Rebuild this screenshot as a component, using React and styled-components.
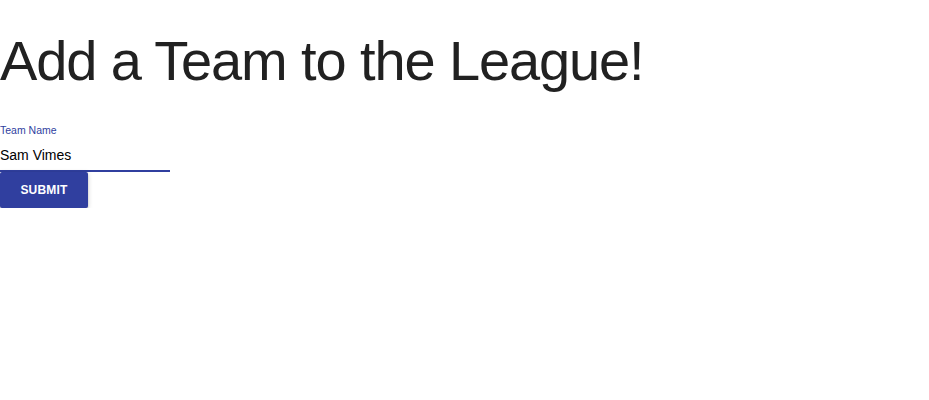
import {useEffect, useRef} from 'react';
import styled, {createGlobalStyle} from 'styled-components';

const GlobalStyle = createGlobalStyle`
    html, body {
        margin: 0;
        padding: 0;
        background: #fff;
        font-family: "Liberation Sans", Arial, sans-serif;
    }
`

const Page = styled.div`
    display: flex;
    flex-direction: column;
    align-items: flex-start;
`

const Title = styled.h1`
    margin: 24px 0 0;
    font-size: 56px;
    font-weight: 400;
    line-height: 73px;
    letter-spacing: -0.02em;
    color: #212121;
`

const Form = styled.form`
    display: flex;
    flex-direction: column;
    align-items: flex-start;
    margin-top: 28px;
`

const Field = styled.div`
    display: flex;
    flex-direction: column;
    width: 170px;
    border-bottom: 2px solid #303f9f;
`

const Label = styled.label`
    font-size: 10.5px;
    color: #303f9f;
    line-height: 1;
    margin-bottom: 11px;
`

const Input = styled.input`
    display: block;
    box-sizing: content-box;
    height: 16px;
    border: none;
    outline: none;
    padding: 0 0 7px;
    font-family: inherit;
    font-size: 14px;
    line-height: 16px;
    color: #000;
    background: transparent;
    caret-color: #000;
`

const Button = styled.button`
    width: 88px;
    height: 36px;
    padding: 0;
    border: none;
    border-radius: 2px;
    background: #303f9f;
    color: #fff;
    font-family: inherit;
    font-size: 12px;
    font-weight: 700;
    letter-spacing: 0.2px;
    text-transform: uppercase;
    box-shadow: 0 1px 5px rgba(0,0,0,0.2), 0 2px 2px rgba(0,0,0,0.14), 0 3px 1px -2px rgba(0,0,0,0.12);
    cursor: pointer;
`

export default function App() {
    const inputRef = useRef(null);
    useEffect(() => {
        const el = inputRef.current;
        if (el) {
            el.focus();
            el.setSelectionRange(el.value.length, el.value.length);
        }
    }, []);
    return <Page>
        <GlobalStyle />
        <Title>Add a Team to the League!</Title>
        <Form onSubmit={e => e.preventDefault()}>
            <Field>
                <Label htmlFor="team">Team Name</Label>
                <Input id="team" ref={inputRef} defaultValue="Sam Vimes" />
            </Field>
            <Button type="submit">Submit</Button>
        </Form>
    </Page>
}
